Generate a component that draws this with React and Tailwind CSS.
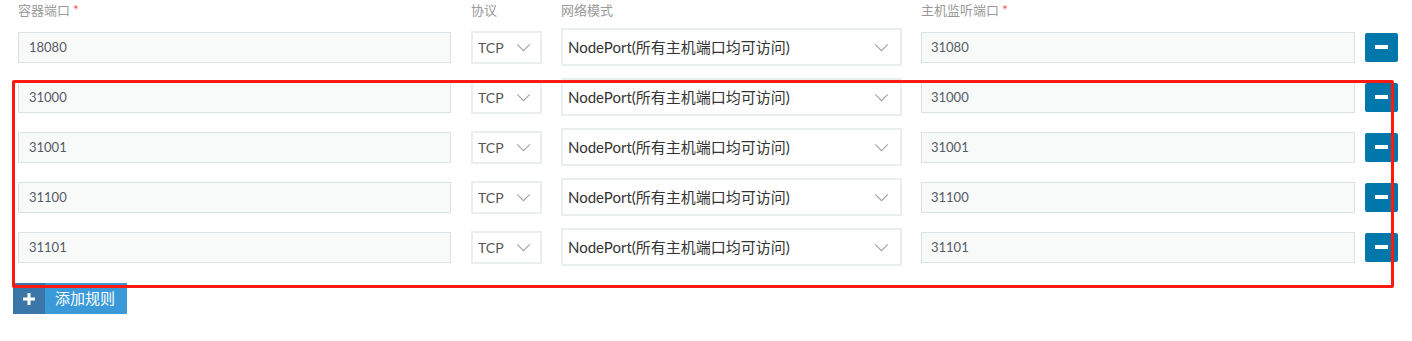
import { useState } from "react";

const font = { fontFamily: "Lato, 'Noto Sans CJK SC', sans-serif" };

function Chevron({ className }) {
  return (
    <svg viewBox="0 0 16 10" className={className} fill="none" stroke="#9aa3a8" strokeWidth="1.2">
      <path d="M1 1.5 L8 8.5 L15 1.5" />
    </svg>
  );
}

function PortRow({ container, host }) {
  return (
    <div className="flex items-center h-[50px]">
      <input
        defaultValue={container}
        className="w-[433px] h-[31px] px-[10px] bg-[#f8fafa] border border-[#dbe2e5] text-[13px] text-[#555a66] outline-none"
      />
      <div className="ml-[20px] w-[71px] h-[33px] border-2 border-[#eaeeef] bg-white flex items-center justify-between pl-[5px] pr-[9px]">
        <span className="text-[14px] leading-none pt-[1px] text-[#555]">TCP</span>
        <Chevron className="w-[15px] h-[9px]" />
      </div>
      <div className="ml-[19px] w-[341px] h-[38px] border-2 border-[#eaeeef] bg-white flex items-center justify-between pl-[5px] pr-[11px]">
        <span className="text-[15px] text-[#333]">NodePort(所有主机端口均可访问)</span>
        <Chevron className="w-[15px] h-[9px]" />
      </div>
      <input
        defaultValue={host}
        className="ml-[19px] w-[434px] h-[31px] px-[9px] bg-[#f8fafa] border border-[#dbe2e5] text-[13px] text-[#555a66] outline-none"
      />
      <button className="ml-[10px] w-[33px] h-[29px] bg-[#0077aa] rounded-[2px] flex items-center justify-center">
        <span className="block w-[13px] h-[4px] bg-white" />
      </button>
    </div>
  );
}

export default function App() {
  const [rows] = useState([
    ["18080", "31080"],
    ["31000", "31000"],
    ["31001", "31001"],
    ["31100", "31100"],
    ["31101", "31101"],
  ]);

  return (
    <div className="relative w-[1412px] h-[341px] bg-white" style={font}>
      <div className="pl-[18px]">
        <div className="flex h-[22px] items-center text-[13px] text-[#999]">
          <div className="w-[453px]">
            容器端口 <span className="text-[#f05050]">*</span>
          </div>
          <div className="w-[90px]">协议</div>
          <div className="w-[360px]">网络模式</div>
          <div>
            主机监听端口 <span className="text-[#f05050]">*</span>
          </div>
        </div>
        {rows.map(([c, h], i) => (
          <PortRow key={i} container={c} host={h} />
        ))}
      </div>
      <button className="ml-[13px] mt-[11px] flex h-[31px] items-stretch">
        <span className="w-[32px] bg-[#3a76a8] flex items-center justify-center">
          <svg viewBox="0 0 12 12" className="w-[12px] h-[12px]">
            <path d="M4.5 0h3v4.5H12v3H7.5V12h-3V7.5H0v-3h4.5z" fill="white" />
          </svg>
        </span>
        <span className="w-[82px] bg-[#3a9ad9] text-white text-[15px] flex items-center pl-[10px]">添加规则</span>
      </button>
      <div className="absolute left-[12px] top-[80px] w-[1382px] h-[208px] border-[3px] border-[#ff1a0f] rounded-[2px] pointer-events-none" />
    </div>
  );
}
